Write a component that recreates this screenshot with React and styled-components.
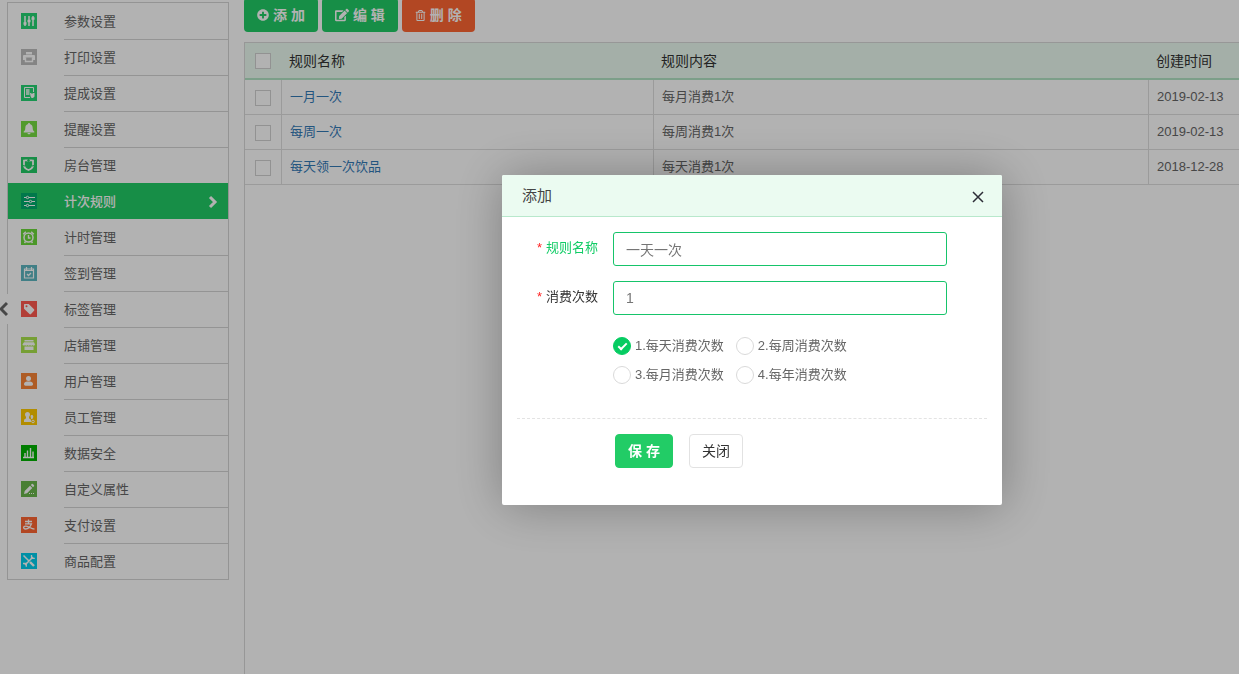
import React, { useState } from 'react';
import styled, { createGlobalStyle, css } from 'styled-components';
import { FaPlusCircle, FaEdit, FaRegTrashAlt } from 'react-icons/fa';

const GlobalStyle = createGlobalStyle`
  *, *::after {
    box-sizing: border-box;
  }

  body {
    margin: 0;
    background: #fff;
    color: #666;
    font-family: "Liberation Sans", "Noto Sans CJK SC", sans-serif;
    font-size: 13px;
    line-height: 20px;
  }

  button, input {
    font-family: inherit;
    line-height: inherit;
  }
`;

const menu = [
  {
    name: '参数设置', color: '#24d573',
    icon: <>
      <path d="M4 3v10M8 3v10M12 3v10" stroke="#fff" strokeWidth="1.500" />
      <path d="M2.500 10.500h3M6.500 8h3M10.500 5.500h3" stroke="#fff" strokeWidth="2.500" />
    </>,
  },
  {
    name: '打印设置', color: '#bebebe',
    icon: <>
      <path d="M5 3h6v2.500H5zM3 6h10a1 1 0 0 1 1 1v4h-2.500V8.500h-7V11H2V7a1 1 0 0 1 1-1z" fill="#fff" />
      <path d="M4.500 8.500v4h7v-4" stroke="#fff" strokeWidth="1.400" fill="none" />
    </>,
  },
  {
    name: '提成设置', color: '#24d573',
    icon: <>
      <path d="M9 12.500H3.500v-10h9V7" stroke="#fff" fill="none" />
      <path d="M5 5h3.500M5 7h3.500M5 9h3.500" stroke="#fff" strokeWidth="1.500" />
      <path d="M9 8h1l1 1 1-1h1.500v3.500L12 13h-1.500L9.500 11z" fill="#fff" />
    </>,
  },
  {
    name: '提醒设置', color: '#76dd43',
    icon: <path d="M8 2c.8 0 1 .5 1 1 2 .6 2.700 2.300 2.700 4 0 2 .6 2.700 1.600 3.500V11.500H2.700V10.500C3.700 9.700 4.300 9 4.300 7 4.300 5.300 5 3.600 7 3c0-.5.2-1 1-1zM6.500 12h3c0 .8-.7 1.300-1.500 1.300S6.500 12.800 6.500 12z" fill="#fff" />,
  },
  {
    name: '房台管理', color: '#22cc66',
    icon: <>
      <path d="M7.500 3.500c-1.500 0-3-.5-4.500 0v4.500C3 10.800 5.500 12.300 7.500 13c2-.7 4.500-2.200 4.500-5V3.500c-1.500-.5-3 0-4.500 0z" stroke="#fff" strokeWidth="1.800" fill="none" />
      <path d="M7.500 2l1 1.500-1 1-1-1zM2 8.500l2 .5M13 8.500l-2 .5" stroke="#22cc66" fill="#22cc66" />
    </>,
  },
  {
    name: '计次规则', color: '#00ac6c',
    icon: <>
      <path d="M3 4.500h11M3 8.500h11M3 12.500h11" stroke="#fff" strokeWidth="1.200" />
      <g fill="#00ac6c" stroke="#fff">
        <circle cx="6.500" cy="4.500" r="1.200" />
        <circle cx="9.500" cy="8.500" r="1.200" />
        <circle cx="6.500" cy="12.500" r="1.200" />
      </g>
    </>,
  },
  {
    name: '计时管理', color: '#6bd83a',
    icon: <>
      <circle cx="7.500" cy="8.500" r="4.500" stroke="#fff" strokeWidth="1.500" fill="none" />
      <path d="M7.500 6v3h2M2.200 5.300l2.600-2.600M12.800 5.300l-2.600-2.600M4.500 12.500L3.500 14M10.500 12.500l1 1.500" stroke="#fff" strokeWidth="1.400" fill="none" />
    </>,
  },
  {
    name: '签到管理', color: '#5eb6c0',
    icon: <>
      <path d="M3.500 4h9v9h-9zM3 5.500h10M5.500 2v3M10.500 2v3" stroke="#fff" strokeWidth="1.200" fill="none" />
      <path d="M6 9l1.500 1.500L10 8" stroke="#fff" strokeWidth="1.300" fill="none" />
    </>,
  },
  {
    name: '标签管理', color: '#ff5950',
    icon: <>
      <path d="M3.500 3h4.200L13 8.300c.5.500.5 1 0 1.500L10 13c-.5.500-1 .5-1.500 0L3 7.700V3.500z" fill="#fff" />
      <circle cx="5.500" cy="5.300" r="1" fill="#ff5950" />
    </>,
  },
  {
    name: '店铺管理', color: '#a9e44d',
    icon: <path d="M3.500 3h9v1.500h-9zM3 5.200h10l1 2.300c-.5 1.500-2 1.500-2.500.5-.5 1-2 1-2.500 0-.5 1-2 1-2.500 0-.5 1-2 1-2.500 0-.5 1-2 1-2.500-.5zM3.500 9.500h9V13h-9z" fill="#fff" />,
  },
  {
    name: '用户管理', color: '#fa8436',
    icon: <>
      <circle cx="7.500" cy="5.500" r="2.500" fill="#fff" />
      <path d="M3 11c0-1.500 1.500-2.500 3-2.500h3c1.500 0 3 1 3 2.500 0 1-.5 1.700-1.500 1.700h-6C3.500 12.700 3 12 3 11z" fill="#fff" />
    </>,
  },
  {
    name: '员工管理', color: '#ffca00',
    icon: <>
      <path d="M6.500 3C8 3 9 4 9 5.500c0 1-.5 1.500-1 2.500v1.500c1 .5 2 .8 2 2v1.500H3v-1.500c0-1.200 1-1.500 2-2V8c-.5-1-1-1.500-1-2.500C4 4 5 3 6.500 3z" fill="#fff" />
      <path d="M10.700 6c1 0 1.600.7 1.600 1.700S11.500 9.500 11.500 10h-1.300L9.500 7c.2-.6.600-1 1.200-1z" fill="#fff" />
      <circle cx="12" cy="12.500" r="1.300" stroke="#fff" fill="none" />
    </>,
  },
  {
    name: '数据安全', color: '#00b300',
    icon: <path d="M2 12.500h11M4 12V8M6.500 12V5.500M9.500 12V3M12 12V6.500" stroke="#fff" strokeWidth="1.400" />,
  },
  {
    name: '自定义属性', color: '#69b64b',
    icon: <>
      <path d="M3 13l.7-3L9 4.700l2.300 2.300L6 12.300zM9.800 4L11 2.800c.5-.5 2.700 1.700 2.200 2.200L12 6.200z" fill="#fff" />
      <path d="M8 12.500h6" stroke="#fff" strokeDasharray="1 1" />
    </>,
  },
  {
    name: '支付设置', color: '#ff6633',
    icon: <path d="M4 4.500h7M7.500 2.500v4M4 6.800h6.500C9.500 9.500 7 12 4.500 12c-2.500 0-2.500-2.800 0-2.800 3 0 5 2.300 9 3" stroke="#fff" strokeWidth="1.300" fill="none" />,
  },
  {
    name: '商品配置', color: '#00cfee',
    icon: <>
      <path d="M2.500 2.500L8 8M12 4L4 12" stroke="#fff" strokeWidth="1.500" />
      <path d="M9 9l4 4" stroke="#fff" strokeWidth="2.400" />
      <path d="M10.500 2v3.300h3.300M2 10.500h3.300v3.300" stroke="#fff" strokeWidth="1.300" fill="none" />
    </>,
  },
];

const rules = [
  { name: '一月一次', content: '每月消费1次', date: '2019-02-13' },
  { name: '每周一次', content: '每周消费1次', date: '2019-02-13' },
  { name: '每天领一次饮品', content: '每天消费1次', date: '2018-12-28' },
];

const periods = ['1.每天消费次数', '2.每周消费次数', '3.每月消费次数', '4.每年消费次数'];

const Page = styled.div`
  display: flex;
  min-height: 100vh;
  padding-left: 7px;
  gap: 15px;
`;

const Sidebar = styled.nav`
  position: relative;
  flex: none;
  align-self: flex-start;
  width: 222px;
  margin-top: 2px;
  border: 1px solid #d4d4d4;
`;

const Collapse = styled.button`
  position: absolute;
  left: -8px;
  top: 291px;
  display: flex;
  align-items: center;
  width: 8px;
  height: 30px;
  padding: 0;
  border: 0;
  background: #fff;
  color: #666;
`;

const MenuLabel = styled.span`
  display: flex;
  flex: 1;
  align-items: center;
  justify-content: space-between;
  height: 36px;
  padding-right: 10px;
  border-top: 1px solid transparent;
`;

const MenuItem = styled.a`
  display: flex;
  align-items: center;
  gap: 27px;
  height: 36px;
  padding-left: 13px;
  color: #666;
  text-decoration: none;

  & + & ${MenuLabel} {
    border-color: #d4d4d4;
  }

  ${({ $active }) => $active && css`
    background: #22cc66;
    color: #fff;
    font-weight: 500;

    && ${MenuLabel},
    && + a ${MenuLabel} {
      border-color: transparent;
    }
  `}
`;

const MenuIcon = styled.svg`
  flex: none;
  width: 16px;
  height: 16px;
  background: ${({ $color }) => $color};
`;

const Main = styled.main`
  display: flex;
  flex: 1;
  flex-direction: column;
  min-width: 0;
  gap: 10px;
`;

const Toolbar = styled.div`
  display: flex;
  align-items: flex-end;
  gap: 4px;
  height: 32px;
  overflow: hidden;
`;

const ToolButton = styled.button`
  display: flex;
  flex: none;
  align-items: center;
  gap: 4px;
  height: 34px;
  padding: 0 13px;
  border: 0;
  border-radius: 4px;
  background: ${({ $danger }) => ($danger ? '#ff6633' : '#22cc66')};
  color: #fff;
  font-size: 14px;
  font-weight: bold;
  white-space: nowrap;
`;

const TableWrap = styled.div`
  flex: 1;
  border: 1px solid #d9d9d9;
  border-width: 1px 0 0 1px;
`;

const Table = styled.table`
  width: 100%;
  table-layout: fixed;
  border-collapse: separate;
  border-spacing: 0;
`;

const Th = styled.th`
  width: ${({ $width }) => $width || 'auto'};
  height: 37px;
  padding: 0 7px;
  border-bottom: 2px solid #b2e4c5;
  background: #ebfbf1;
  color: #333;
  font-size: 14px;
  font-weight: normal;
  text-align: left;
`;

const Td = styled.td`
  height: 35px;
  padding: 0 8px;
  border: 1px solid #dedede;
  border-width: 0 1px 1px 0;

  &:last-child {
    border-right: 0;
  }
`;

const Check = styled.input`
  display: block;
  width: 16px;
  height: 16px;
  margin: 2px 2px 0;
  appearance: none;
  border: 1px solid #d2d2d2;
  background: #fff;

  th & {
    margin: 0 3px;
  }

  &:checked {
    background: #22cc66;
  }
`;

const RuleLink = styled.a`
  color: #337ab7;
  text-decoration: none;
`;

const Overlay = styled.div`
  position: fixed;
  inset: 0;
  display: flex;
  align-items: flex-start;
  justify-content: center;
  padding: 175px 0 0 265px;
  background: rgba(0, 0, 0, .3);
`;

const Dialog = styled.form`
  width: 500px;
  border-radius: 2px;
  background: #fff;
  box-shadow: 1px 1px 50px rgba(0, 0, 0, .3);
`;

const DialogHeader = styled.header`
  display: flex;
  align-items: center;
  justify-content: space-between;
  height: 42px;
  padding: 0 18px 0 20px;
  border-bottom: 1px solid #b8e8cc;
  border-radius: 2px 2px 0 0;
  background: #ebfbf1;
`;

const DialogTitle = styled.h2`
  margin: 0;
  color: #444;
  font-size: 15px;
  font-weight: normal;
`;

const CloseButton = styled.button`
  display: flex;
  padding: 2px 0 0;
  border: 0;
  background: none;
`;

const Fields = styled.div`
  display: flex;
  flex-direction: column;
  gap: 15px;
  padding: 15px 55px 34px 15px;
`;

const Field = styled.div`
  display: flex;
  align-items: center;
  gap: 15px;
`;

const FieldLabel = styled.label`
  width: 81px;
  padding-bottom: 2px;
  color: ${({ $focused }) => ($focused ? '#11cc66' : '#333')};
  text-align: right;
`;

const Star = styled.span`
  margin-right: 4px;
  color: #ff2222;
`;

const TextInput = styled.input`
  flex: 1;
  min-width: 0;
  height: 34px;
  padding: 0 12px;
  border: 1px solid #16c46a;
  border-radius: 3px;
  outline: 0;
  color: #757575;
  font-size: 14px;
`;

const Radios = styled.div`
  display: grid;
  grid-template-columns: max-content max-content;
  gap: 11px 12px;
  padding: 7px 0 0 96px;
`;

const RadioLabel = styled.label`
  display: flex;
  align-items: center;
  gap: 4px;
  height: 18px;
`;

const Radio = styled.input`
  display: grid;
  place-content: center;
  flex: none;
  width: 18px;
  height: 18px;
  margin: 0;
  appearance: none;
  border: 1px solid #d9d9d9;
  border-radius: 50%;

  &:checked {
    border-color: #06cc62;
    background: #06cc62;
  }

  &:checked::after {
    content: '';
    width: 9px;
    height: 5px;
    margin-bottom: 2px;
    border: solid #fff;
    border-width: 0 0 2px 2px;
    transform: rotate(-45deg);
  }
`;

const DialogFooter = styled.footer`
  display: flex;
  gap: 16px;
  margin: 0 15px;
  padding: 15px 0 37px 98px;
  border-top: 1px dashed #e3e3e3;
`;

const FormButton = styled.button`
  height: 34px;
  padding: 0 12px;
  border: 1px solid ${({ $primary }) => ($primary ? '#22cc66' : '#e2e2e2')};
  border-radius: 4px;
  background: ${({ $primary }) => ($primary ? '#22cc66' : '#fff')};
  color: ${({ $primary }) => ($primary ? '#fff' : '#333')};
  font-size: 14px;
  font-weight: ${({ $primary }) => ($primary ? 'bold' : 'normal')};
`;

const App = () => {
  const [name, setName] = useState('一天一次');
  const [times, setTimes] = useState('1');
  const [period, setPeriod] = useState(0);

  return (
    <>
      <GlobalStyle />
      <Page>
        <Sidebar>
          {menu.map((item) => (
            <MenuItem key={item.name} href="#" $active={item.name === '计次规则'}>
              <MenuIcon viewBox="0 0 16 16" $color={item.color} aria-hidden="true">{item.icon}</MenuIcon>
              <MenuLabel>
                {item.name}
                {item.name === '计次规则' && (
                  <svg width="10" height="14" viewBox="0 0 10 14" aria-hidden="true">
                    <path d="M2 2l5 5-5 5" stroke="#fff" strokeWidth="3" fill="none" />
                  </svg>
                )}
              </MenuLabel>
            </MenuItem>
          ))}
          <Collapse type="button" aria-label="收起">
            <svg width="8" height="16" viewBox="0 0 8 16" aria-hidden="true">
              <path d="M7 2L1 8l6 6" stroke="currentColor" strokeWidth="3" fill="none" />
            </svg>
          </Collapse>
        </Sidebar>

        <Main>
          <Toolbar>
            <ToolButton type="button"><FaPlusCircle size={12} />添 加</ToolButton>
            <ToolButton type="button"><FaEdit size={14} />编 辑</ToolButton>
            <ToolButton type="button" $danger><FaRegTrashAlt size={11} />删 除</ToolButton>
          </Toolbar>

          <TableWrap>
            <Table>
              <thead>
                <tr>
                  <Th $width="37px"><Check type="checkbox" aria-label="全选" /></Th>
                  <Th $width="372px">规则名称</Th>
                  <Th>规则内容</Th>
                  <Th $width="90px">创建时间</Th>
                </tr>
              </thead>
              <tbody>
                {rules.map((rule) => (
                  <tr key={rule.name}>
                    <Td><Check type="checkbox" aria-label={rule.name} /></Td>
                    <Td><RuleLink href="#">{rule.name}</RuleLink></Td>
                    <Td>{rule.content}</Td>
                    <Td>{rule.date}</Td>
                  </tr>
                ))}
              </tbody>
            </Table>
          </TableWrap>
        </Main>
      </Page>

      <Overlay>
        <Dialog role="dialog" aria-labelledby="dialog-title" onSubmit={(e) => e.preventDefault()}>
          <DialogHeader>
            <DialogTitle id="dialog-title">添加</DialogTitle>
            <CloseButton type="button" aria-label="关闭窗口">
              <svg width="12" height="12" viewBox="0 0 12 12">
                <path d="M1 1l10 10M11 1L1 11" stroke="#2d2d37" strokeWidth="1.500" />
              </svg>
            </CloseButton>
          </DialogHeader>

          <Fields>
            <Field>
              <FieldLabel htmlFor="rule-name" $focused><Star>*</Star>规则名称</FieldLabel>
              <TextInput id="rule-name" value={name} onChange={(e) => setName(e.target.value)} />
            </Field>
            <Field>
              <FieldLabel htmlFor="rule-times"><Star>*</Star>消费次数</FieldLabel>
              <TextInput id="rule-times" value={times} onChange={(e) => setTimes(e.target.value)} />
            </Field>
            <Radios>
              {periods.map((text, i) => (
                <RadioLabel key={text}>
                  <Radio type="radio" name="period" checked={period === i} onChange={() => setPeriod(i)} />
                  {text}
                </RadioLabel>
              ))}
            </Radios>
          </Fields>

          <DialogFooter>
            <FormButton type="submit" $primary>保 存</FormButton>
            <FormButton type="button">关闭</FormButton>
          </DialogFooter>
        </Dialog>
      </Overlay>
    </>
  );
};

export default App;
